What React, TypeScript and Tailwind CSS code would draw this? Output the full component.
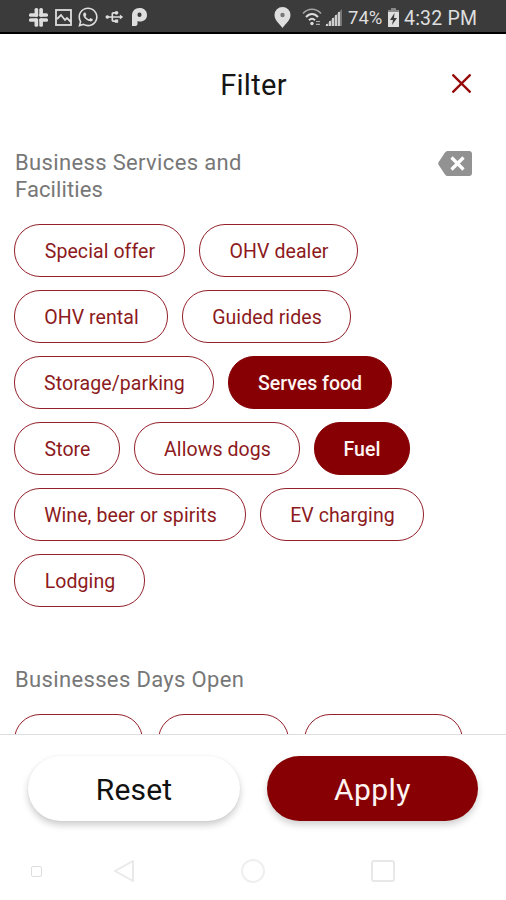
import React from "react";
import { FaWhatsapp } from "react-icons/fa";
import { MdUsb } from "react-icons/md";

type Option = { label: string; width: string; selected?: boolean; lowered?: boolean };

const services: Option[][] = [
  [
    { label: "Special offer", width: "w-[171px]" },
    { label: "OHV dealer", width: "w-[159px]" },
  ],
  [
    { label: "OHV rental", width: "w-[154px]" },
    { label: "Guided rides", width: "w-[169px]" },
  ],
  [
    { label: "Storage/parking", width: "w-[200px]" },
    { label: "Serves food", width: "w-[164px]", selected: true },
  ],
  [
    { label: "Store", width: "w-[106px]" },
    { label: "Allows dogs", width: "w-[166px]" },
    { label: "Fuel", width: "w-[96px]", selected: true },
  ],
  [
    { label: "Wine, beer or spirits", width: "w-[232px]" },
    { label: "EV charging", width: "w-[164px]" },
  ],
  [{ label: "Lodging", width: "w-[131px]" }],
];

const days: Option[] = [
  { label: "Monday", width: "w-[129px]", lowered: true },
  { label: "Tuesday", width: "w-[131px]", lowered: true },
  { label: "Wednesday", width: "w-[159px]", lowered: true },
];

function Chip({ label, width, selected, lowered }: Option) {
  return (
    <button
      className={`${width} h-[52.5px] shrink-0 whitespace-nowrap rounded-[26px] border text-center text-[19.5px] leading-none ${
        lowered ? "pt-[4px]" : "pt-[2px]"
      } ${
        selected
          ? "border-[#860004] bg-[#860004] font-medium text-[#fff4f2]"
          : "border-[#93202a] bg-white pl-px tracking-[0.08px] text-[#8c1a20]"
      }`}
    >
      {label}
    </button>
  );
}

function StatusBar() {
  return (
    <header className="flex h-[34px] shrink-0 items-center border-b-2 border-black bg-[#3b3b3b] pt-[2px] text-[#dedede]">
      <svg className="ml-[29px] h-[19px] w-[19px]" viewBox="0 0 24 24" fill="currentColor">
        <rect x="7" y="0" width="4.6" height="11" rx="2" />
        <rect x="0" y="6.5" width="11.6" height="4.6" rx="2" />
        <rect x="13" y="0" width="4.6" height="11" rx="2" />
        <rect x="13" y="6.5" width="11" height="4.6" rx="2" />
        <rect x="0" y="12.8" width="11" height="4.6" rx="2" />
        <rect x="7" y="12.8" width="4.6" height="11" rx="2" />
        <rect x="13" y="12.8" width="11" height="4.6" rx="2" />
        <rect x="13" y="12.8" width="4.6" height="11" rx="2" />
      </svg>
      <svg className="ml-[7px] h-[17px] w-[17px]" viewBox="0 0 17 17" fill="none" stroke="currentColor" strokeWidth="1.8">
        <rect x="1" y="1" width="15" height="15" />
        <path d="M2 10l4-4 4 5 2-2 4 4" />
      </svg>
      <FaWhatsapp className="ml-[5px] h-[22px] w-[22px]" />
      <MdUsb className="ml-[5px] h-[20px] w-[20px] rotate-90" />
      <svg className="ml-[8px] h-[18px] w-[15px]" viewBox="0 0 15 18">
        <path
          fill="currentColor"
          fillRule="evenodd"
          d="M0 7.5C0 3 3 0 7.5 0S15 2.7 15 7s-3 6.500-6.800 6.500c-1.200 0-2-.3-2.700-.6V16c0 1.300-1 2-2.300 2H0V7.500Zm5.500-.7C5.500 8.300 6.300 9 7.500 9s2-.8 2-2.200-.8-2.200-2-2.200-2 .8-2 2.200Z"
        />
      </svg>
      <svg className="ml-[127px] h-[21px] w-[17px]" viewBox="0 0 17 21" fill="currentColor">
        <path d="M8.5 0A8 8 0 0 0 .5 8c0 5.3 5.2 9 8 13 2.8-4 8-7.7 8-13a8 8 0 0 0-8-8Z" />
        <circle cx="8.5" cy="8" r="2.2" fill="#777" />
      </svg>
      <svg className="ml-[11px] h-[18px] w-[20px]" viewBox="0 0 20 18" fill="none" stroke="currentColor">
        <path d="M1 5.5C6-.2 14-.2 19 5.5" strokeWidth="1.6" opacity=".65" />
        <path d="M4 9c3.5-4 8.5-4 12 0" strokeWidth="2" />
        <path d="M7 12.3c2-2 4-2 6 0" strokeWidth="2" />
        <circle cx="10" cy="15.5" r="1.7" fill="currentColor" stroke="none" />
        <path d="M14 13.5h4M14 16.3h4" strokeWidth="1.2" opacity=".7" />
      </svg>
      <svg className="ml-[3px] h-[17px] w-[17px]" viewBox="0 0 17 17">
        <path d="M0 17 17 0v17Z" fill="#777" />
        <path d="M2 15v2M5 12v5M8 9v8M11 6v11M14 3v14" stroke="#cfcfcf" strokeWidth="2" />
      </svg>
      <span className="ml-[6px] w-[33px] whitespace-nowrap pt-[2px] text-[18.5px] leading-none">74%</span>
      <svg className="ml-[7px] h-[19px] w-[11px]" viewBox="0 0 11 19">
        <path d="M3 0h5v2h3v3H0V2h3Z" fill="#888" />
        <path d="M0 4h11v15H0Z" fill="#dedede" />
        <path d="M6.5 5 2 12h3l-1 5 5-7H6Z" fill="#3b3b3b" />
      </svg>
      <span className="ml-[5px] whitespace-nowrap pt-[3px] text-[19.5px] leading-none tracking-[0.2px]">4:32 PM</span>
    </header>
  );
}

export default function App() {
  return (
    <div className="flex h-[900px] w-[506px] flex-col overflow-hidden bg-white font-['Roboto',sans-serif]">
      <StatusBar />
      <div className="grid h-[100px] shrink-0 grid-cols-[1fr_auto_1fr] items-center">
        <h1 className="col-start-2 pl-px pt-[2px] text-[29px] leading-none tracking-[0.3px] text-[#151515]">Filter</h1>
        <button aria-label="Close" className="mb-[2px] mr-[35px] justify-self-end">
          <svg className="h-[19px] w-[19px]" viewBox="0 0 19 19" stroke="#960b0c" strokeWidth="2.3">
            <path d="m.5.5 18 18M18.5.5l-18 18" />
          </svg>
        </button>
      </div>
      <main className="flex min-h-0 flex-1 flex-col overflow-hidden border-b border-[#dedede] px-[14px] pt-[15px]">
        <div className="flex h-[75px] shrink-0 items-start justify-between">
          <h2 className="w-[270px] pl-px text-[22px] leading-[27px] tracking-[0.35px] text-[#777]">
            Business Services and
            <br />
            <span className="tracking-[0.1px]">Facilities</span>
          </h2>
          <button aria-label="Clear selection" className="mr-[20px] mt-px">
            <svg className="h-[27px] w-[34px]" viewBox="0 0 34 27">
              <path d="M9.5 1H31a3 3 0 0 1 3 3v19a3 3 0 0 1-3 3H9.5Q8 26 7 24.5L.7 15q-1-1.5 0-3L7 2.5Q8 1 9.5 1Z" fill="#929292" />
              <path d="m13.5 7.5 12 12M25.5 7.5l-12 12" stroke="white" strokeWidth="3.2" />
            </svg>
          </button>
        </div>
        <div className="flex shrink-0 flex-col gap-[13.5px]">
          {services.map((row, i) => (
            <div key={i} className="flex gap-[14px]">
              {row.map((option) => (
                <Chip key={option.label} {...option} />
              ))}
            </div>
          ))}
        </div>
        <h2 className="mt-[59px] shrink-0 pl-px text-[22px] leading-[27px] tracking-[0.35px] text-[#777]">Businesses Days Open</h2>
        <div className="mt-[21.5px] flex shrink-0 gap-[15px]">
          {days.map((option) => (
            <Chip key={option.label} {...option} />
          ))}
        </div>
      </main>
      <footer className="flex h-[109px] shrink-0 items-start gap-[27px] px-[28px] pt-[21px] text-[30px] leading-none">
        <button className="h-[65px] w-[212px] rounded-full bg-white pt-[3px] tracking-[0.15px] text-[#111] shadow-[0_4px_7px_rgba(0,0,0,0.2),0_0_2px_rgba(0,0,0,0.06)]">
          Reset
        </button>
        <button className="h-[65px] w-[211px] rounded-full bg-[#860004] pt-[3px] tracking-[0.4px] text-[#fff4f2] shadow-[0_4px_7px_rgba(0,0,0,0.18)]">
          Apply
        </button>
      </footer>
      <nav className="flex h-[56px] shrink-0 items-center pb-[2px]">
        <span className="ml-[31px] h-[11px] w-[11px] rounded-[2px] border border-[#dedede]" />
        <svg className="ml-[71px] h-[24px] w-[22px]" viewBox="0 0 22 24" fill="none" stroke="#e9e9e9" strokeWidth="2" strokeLinejoin="round">
          <path d="M20 2v20L2 12Z" />
        </svg>
        <span className="ml-[106px] h-[24px] w-[24px] rounded-full border-2 border-[#efefef]" />
        <span className="ml-[106px] h-[22px] w-[24px] rounded-[3px] border-2 border-[#e8e8e8]" />
      </nav>
    </div>
  );
}
